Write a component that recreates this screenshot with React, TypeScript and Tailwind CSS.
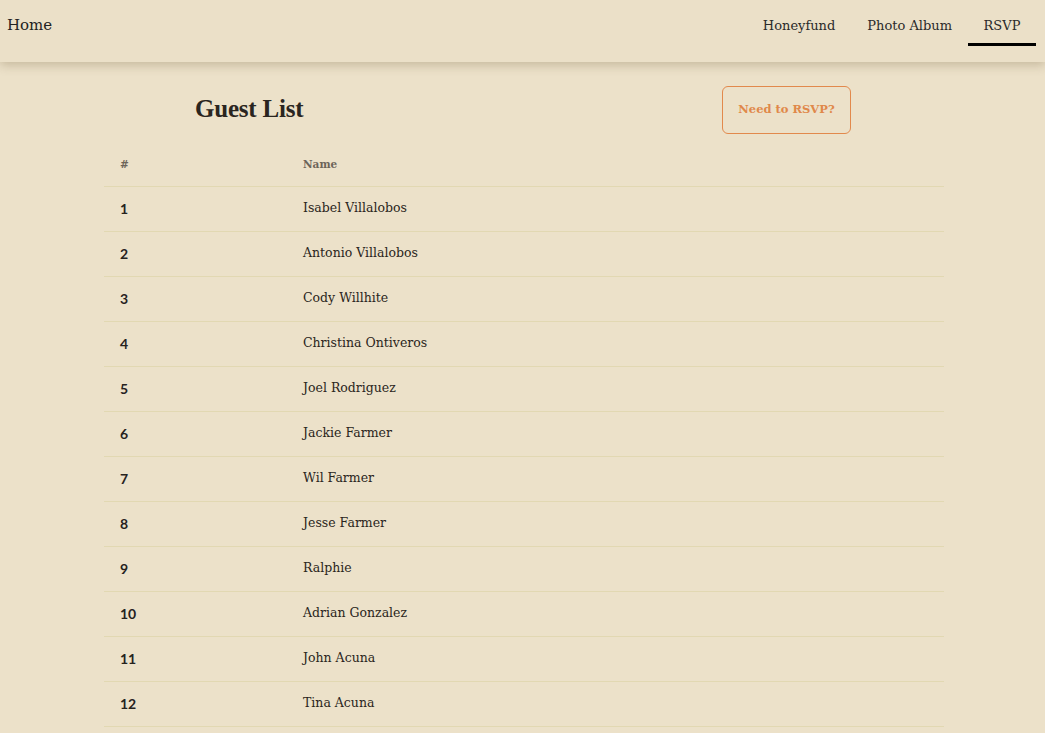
import React from "react";

const guests = [
  "Isabel Villalobos",
  "Antonio Villalobos",
  "Cody Willhite",
  "Christina Ontiveros",
  "Joel Rodriguez",
  "Jackie Farmer",
  "Wil Farmer",
  "Jesse Farmer",
  "Ralphie",
  "Adrian Gonzalez",
  "John Acuna",
  "Tina Acuna",
];

const serif = "font-['DejaVu_Serif',serif]";

export default function App() {
  return (
    <div className="min-h-[733px] bg-[#ece1c9] text-[#2b2622] overflow-hidden">
      <header className="relative z-10 h-[62px] bg-[#ebe0c8] shadow-[0_3px_10px_rgba(80,60,20,0.25)] flex items-start">
        <div className="flex h-[48px] w-full items-stretch">
          <div className={`${serif} flex items-center pl-[7px] pt-[3px] text-[15px] text-[#222]`}>Home</div>
          <nav className={`ml-auto flex items-stretch pr-[9px] ${serif} text-[13px] text-[#2a2a2a]`}>
            <a className="flex items-center px-[16px] pt-[3px]">Honeyfund</a>
            <a className="flex items-center px-[16px] pt-[3px]">Photo Album</a>
            <a className="relative flex items-center px-[16px] pt-[3px] w-[68px] justify-center">
              RSVP
              <span className="absolute left-0 right-0 bottom-[2px] h-[3px] bg-black" />
            </a>
          </nav>
        </div>
      </header>

      <main className="ml-[104px] w-[840px]">
        <div className="flex items-center h-[82px] pt-[11px]">
          <h1 className="font-['Liberation_Serif',serif] font-bold text-[25px] pl-[91px] tracking-[-0.2px] text-[#2a2520]">
            Guest List
          </h1>
          <button className={`ml-auto mr-[93px] mt-[2px] h-[48px] w-[129px] rounded-[6px] border border-[#e2894c] ${serif} font-bold text-[11.5px] text-[#e0884a]`}>
            Need to RSVP?
          </button>
        </div>

        <table className="w-full border-collapse">
          <thead>
            <tr className="h-[42px] border-b border-[#e2d8b2]">
              <th className={`w-[183px] pl-[16px] text-left ${serif} font-bold text-[10.5px] text-[#6c6459]`}>#</th>
              <th className={`pl-[16px] text-left ${serif} font-bold text-[10.5px] text-[#6c6459]`}>Name</th>
            </tr>
          </thead>
          <tbody>
            {guests.map((g, i) => (
              <tr key={g} className="h-[45px] border-b border-[#e2d8b2]">
                <td className="pl-[16px] font-['Lato',sans-serif] font-bold text-[14px] text-[#26221e]">{i + 1}</td>
                <td className={`pl-[16px] ${serif} text-[12.5px] text-[#2a2520]`}>{g}</td>
              </tr>
            ))}
          </tbody>
        </table>
      </main>
    </div>
  );
}
